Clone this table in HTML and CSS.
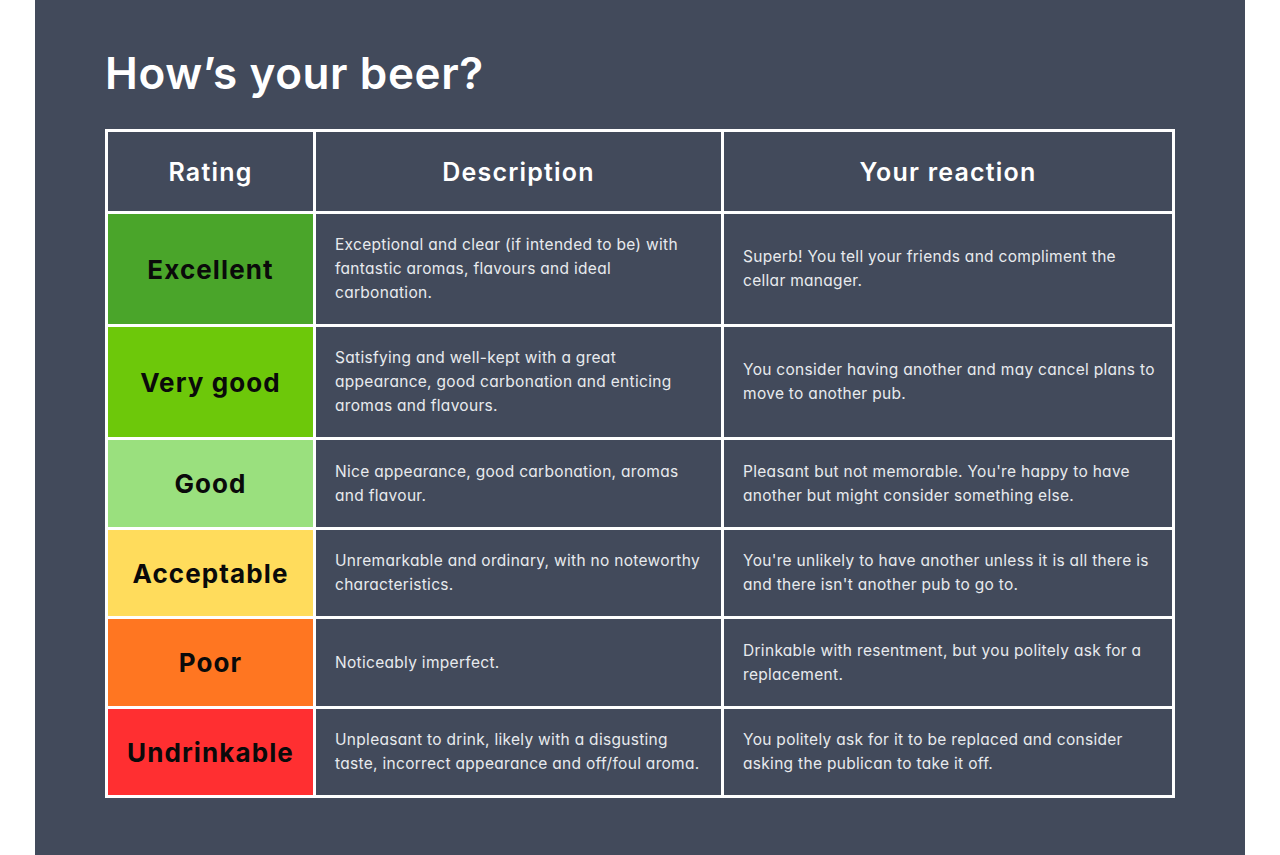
FILE: index.html
```html
<!DOCTYPE html>
<html lang="en">
<head>
<meta charset="utf-8">
<title>How's your beer?</title>
<link rel="stylesheet" href="styles.css">
</head>
<body>
<main class="panel">
  <h1 class="title">How’s your beer?</h1>
  <div class="grid" role="table">
    <div class="head" role="columnheader">Rating</div>
    <div class="head" role="columnheader">Description</div>
    <div class="head" role="columnheader">Your reaction</div>

    <div class="rating excellent">Excellent</div>
    <div class="cell">Exceptional and clear (if intended to be) with fantastic aromas, flavours and ideal carbonation.</div>
    <div class="cell">Superb! You tell your friends and compliment the cellar manager.</div>

    <div class="rating verygood">Very good</div>
    <div class="cell">Satisfying and well-kept with a great appearance, good carbonation and enticing aromas and flavours.</div>
    <div class="cell">You consider having another and may cancel plans to move to another pub.</div>

    <div class="rating good">Good</div>
    <div class="cell">Nice appearance, good carbonation, aromas and flavour.</div>
    <div class="cell">Pleasant but not memorable. You're happy to have another but might consider something else.</div>

    <div class="rating acceptable">Acceptable</div>
    <div class="cell">Unremarkable and ordinary, with no noteworthy characteristics.</div>
    <div class="cell">You're unlikely to have another unless it is all there is and there isn't another pub to go to.</div>

    <div class="rating poor">Poor</div>
    <div class="cell">Noticeably imperfect.</div>
    <div class="cell">Drinkable with resentment, but you politely ask for a replacement.</div>

    <div class="rating undrinkable">Undrinkable</div>
    <div class="cell">Unpleasant to drink, likely with a disgusting taste, incorrect appearance and off/foul aroma.</div>
    <div class="cell">You politely ask for it to be replaced and consider asking the publican to take it off.</div>
  </div>
</main>
</body>
</html>
```
FILE: styles.css
```css
html, body {
  margin: 0;
  padding: 0;
  background: #ffffff;
}
body {
  font-family: Inter, "Noto Sans", "Liberation Sans", sans-serif;
}
.panel {
  box-sizing: border-box;
  margin-left: 35px;
  width: 1210px;
  height: 855px;
  background: #424a5b;
  padding: 51px 0 0 70px;
}
.title {
  margin: 0 0 34px 0;
  font-size: 44px;
  line-height: 44px;
  font-weight: 600;
  color: #ffffff;
  letter-spacing: 0.6px;
}
.grid {
  display: grid;
  width: 1070px;
  box-sizing: border-box;
  grid-template-columns: 205px 405px 448px;
  grid-template-rows: 79px 110px 110px 87px 86px 87px 86px;
  gap: 3px;
  padding: 3px;
  background: #ffffff;
}
.head {
  background: #424a5b;
  color: #ffffff;
  font-size: 25px;
  font-weight: 600;
  letter-spacing: 1.2px;
  display: flex;
  align-items: center;
  justify-content: center;
}
.rating {
  display: flex;
  align-items: center;
  justify-content: center;
  font-size: 26px;
  font-weight: 700;
  letter-spacing: 1.1px;
  color: #0a0a0a;
}
.cell {
  background: #424a5b;
  color: #e8eaee;
  font-size: 15.5px;
  line-height: 24px;
  letter-spacing: 0.3px;
  font-feature-settings: "cv11" 1;
  display: flex;
  align-items: center;
  padding: 0 12px 0 19px;
}
.excellent { background: #4aa52a; }
.verygood { background: #6dc80a; }
.good { background: #9ae07e; }
.acceptable { background: #ffdc5c; }
.poor { background: #ff7621; }
.undrinkable { background: #ff2f31; }
```
